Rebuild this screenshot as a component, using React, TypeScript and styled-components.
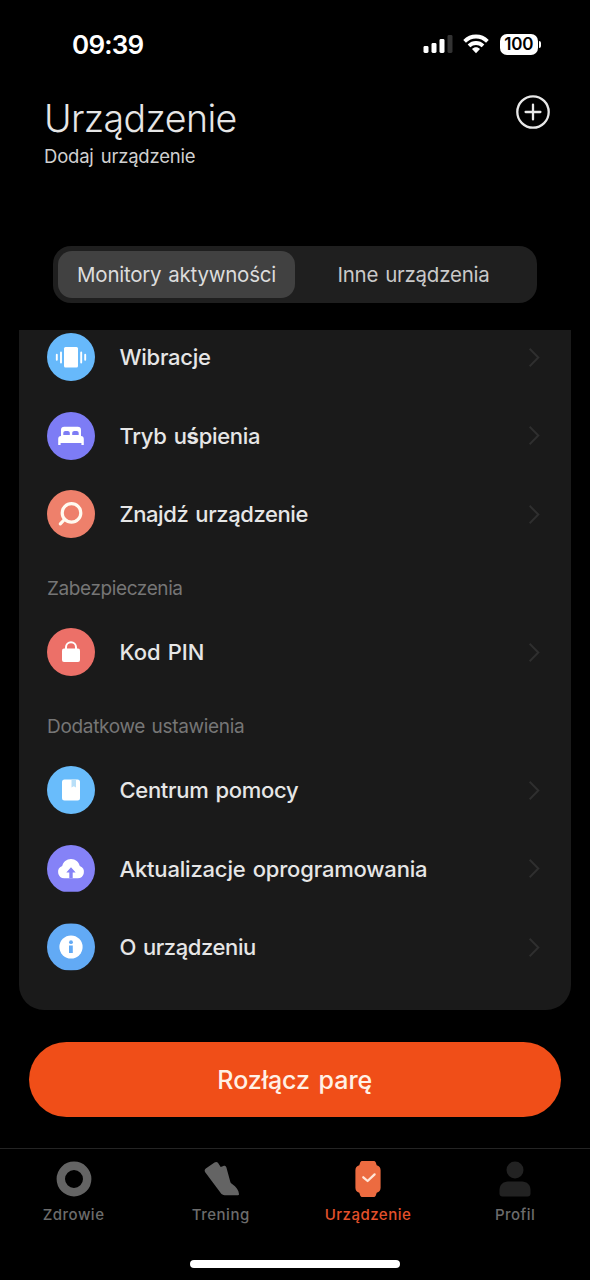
import React from "react";
import styled, { createGlobalStyle } from "styled-components";

const GlobalStyle = createGlobalStyle`
  * { box-sizing: border-box; }
  html, body { margin: 0; background: #000; }
  body { font-family: Inter, "Liberation Sans", sans-serif; color: #e6e6e6; }
  button { font: inherit; color: inherit; background: none; border: 0; padding: 0; margin: 0; }
  svg { display: block; }
`;

const Screen = styled.div`
  width: 590px;
  height: 1280px;
  display: flex;
  flex-direction: column;
  background: #000;
  overflow: hidden;
`;

const StatusBar = styled.header`
  height: 88px;
  flex: none;
  padding: 0 49px 0 72px;
  display: flex;
  align-items: center;
  justify-content: space-between;
`;

const Clock = styled.time`
  font-size: 26px;
  font-weight: 600;
  letter-spacing: -0.75px;
  color: #fff;
`;

const StatusIcons = styled.div`
  display: flex;
  align-items: center;
  gap: 10.5px;
`;

const Battery = styled.div`
  display: flex;
  align-items: center;
  gap: 1.3px;
`;

const BatteryBody = styled.div`
  width: 38px;
  height: 21px;
  border-radius: 7px;
  background: #fff;
  color: #000;
  font-size: 17px;
  font-weight: 600;
  letter-spacing: -0.2px;
  line-height: 21px;
  text-align: center;
`;

const BatteryTip = styled.div`
  width: 2px;
  height: 7px;
  border-radius: 0 2px 2px 0;
  background: #fff;
`;

const TitleBar = styled.div`
  height: 158px;
  flex: none;
  padding: 7px 40px 0 44px;
  display: flex;
  justify-content: space-between;
  align-items: flex-start;
`;

const Title = styled.h1`
  margin: 1px 0 0;
  font-size: 37.5px;
  font-weight: 300;
  line-height: 46px;
  letter-spacing: -0.6px;
`;

const Subtitle = styled.p`
  margin: 2px 0 0;
  font-size: 18.5px;
  line-height: 24px;
  font-weight: 400;
  letter-spacing: -0.2px;
  word-spacing: 2px;
  color: #d0d0d0;
`;

const Segments = styled.div`
  width: 484px;
  height: 57px;
  flex: none;
  margin-left: 53px;
  padding: 5px;
  display: flex;
  border-radius: 18px;
  background: #1f1f1f;
`;

const Segment = styled.button<{ $active?: boolean }>`
  flex: 1;
  border-radius: 14px;
  background: ${(p) => (p.$active ? "#414141" : "transparent")};
  color: ${(p) => (p.$active ? "#dcdcdc" : "#c9c9c9")};
  font-size: 20.5px;
  font-weight: 400;
  letter-spacing: -0.25px;
  word-spacing: 1.5px;
  line-height: 47px;
  white-space: nowrap;
`;

const Card = styled.main`
  width: 552px;
  height: 680px;
  flex: none;
  margin: 27px 0 0 19px;
  overflow: hidden;
  border-radius: 0 0 25px 25px;
  background: #1a1a1a;
`;

const List = styled.div`
  margin-top: -11.8px;
`;

const Row = styled.div`
  height: 78.5px;
  padding: 0 31.5px 0 28px;
  display: flex;
  align-items: center;
`;

const Badge = styled.div<{ $color: string; $cut?: boolean }>`
  width: 48px;
  height: 48px;
  flex: none;
  border-radius: 50%;
  background: ${(p) => p.$color};
  clip-path: ${(p) => (p.$cut ? "inset(0 0 1.2px 0)" : "none")};
`;

const RowLabel = styled.span<{ $spacing: number }>`
  flex: 1;
  margin-left: 24.5px;
  font-size: 22px;
  font-weight: 500;
  letter-spacing: ${(p) => p.$spacing}px;
  word-spacing: 1.5px;
  white-space: nowrap;
  b { font-weight: 700; }
`;

const GroupLabel = styled.h2<{ $spacing: number }>`
  height: 59.5px;
  margin: 0;
  padding: 23.3px 28px 0;
  font-size: 19px;
  font-weight: 400;
  line-height: 24px;
  letter-spacing: ${(p) => p.$spacing}px;
  word-spacing: 1.5px;
  color: #767676;
`;

const Unpair = styled.button`
  width: 532.5px;
  height: 75px;
  flex: none;
  margin: 32px 0 0 28.5px;
  border-radius: 38px;
  background: #f04e18;
  color: #fff1e6;
  font-size: 25px;
  font-weight: 500;
  word-spacing: 2px;
  letter-spacing: -0.05px;
`;

const TabBar = styled.nav`
  height: 110px;
  flex: none;
  margin-top: 31px;
  border-top: 1px solid #242424;
  padding-top: 12px;
  display: grid;
  grid-template-columns: repeat(4, 147.2px);
  align-items: start;
`;

const Tab = styled.button<{ $active?: boolean }>`
  display: flex;
  flex-direction: column;
  align-items: center;
  gap: 8px;
  font-size: 15px;
  font-weight: 500;
  line-height: 20px;
  letter-spacing: 0.5px;
  color: ${(p) => (p.$active ? "#e4512b" : "#6c6c6c")};
`;

const HomeBar = styled.div`
  width: 210px;
  height: 8px;
  flex: none;
  margin: 2px auto 0;
  border-radius: 4px;
  background: #fff;
`;

const Signal = () => (
  <svg width="30" height="20" viewBox="0 0 30 20" fill="#fff">
    <rect x="0.5" y="12" width="5" height="7" rx="1.4" />
    <rect x="8.5" y="9" width="5" height="10" rx="1.4" />
    <rect x="16.5" y="5" width="5" height="14" rx="1.4" />
    <rect x="24.5" y="1" width="5" height="18" rx="1.4" fill="#333" />
  </svg>
);

const Wifi = () => (
  <svg width="26" height="20" viewBox="0 0 26 20">
    <g fill="none" stroke="#fff" strokeWidth="3.8">
      <path d="M1.6 7.3C8 .9 18 .9 24.4 7.3" />
      <path d="M6 11.9C10 8 16 8 20 11.9" />
    </g>
    <path d="M9 15c2.4-2.2 5.6-2.2 8 0L13 19.2z" fill="#fff" />
  </svg>
);

const AddIcon = () => (
  <svg width="34" height="34" viewBox="0 0 34 34" fill="none" stroke="#e8e8e8" strokeWidth="2.3" strokeLinecap="round">
    <circle cx="17" cy="17" r="15.7" />
    <path d="M17 9.6v14.8M9.6 17h14.8" />
  </svg>
);

const Chevron = () => (
  <svg width="11" height="19" viewBox="0 0 11 19" fill="none" stroke="#2f2f2f" strokeWidth="2">
    <path d="M.6 .8l8.7 8.7L.6 18.2" />
  </svg>
);

const glyphs = {
  vibration: (
    <>
      <rect x="17" y="14" width="14" height="20.5" rx="1.5" fill="#fff" />
      <path d="M14 19.5v10M34.2 19.5v10M9.8 21.8v5M38.2 21.8v5" stroke="#fff" strokeWidth="1.9" strokeLinecap="round" />
    </>
  ),
  bed: (
    <path
      fillRule="evenodd"
      fill="#fff"
      d="M14 24v-6c0-2 1.2-3.2 3.2-3.2h13.6c2 0 3.2 1.2 3.2 3.2v6c1.8.1 2.8 1.2 2.8 3v6h-2.4V31H13.6v2h-2.4v-6c0-1.8 1-2.9 2.8-3zM16.3 23h6.5v-1.7c0-1.5-.9-2.3-2.1-2.3h-2.3c-1.2 0-2.1.8-2.1 2.3zM25.2 23h6.5v-1.7c0-1.5-.9-2.3-2.1-2.3h-2.3c-1.2 0-2.1.8-2.1 2.3z"
    />
  ),
  search: (
    <g fill="none" stroke="#fffaf0" strokeWidth="3.2" strokeLinecap="round">
      <circle cx="24.5" cy="22.9" r="9.3" />
      <path d="M17.5 29.5l-4.2 4.3" />
    </g>
  ),
  lock: (
    <>
      <rect x="15" y="20.5" width="18" height="13.5" rx="2" fill="#fff" />
      <path d="M19 21v-1.8a5 5 0 0 1 10 0V21" fill="none" stroke="#fff" strokeWidth="2" />
    </>
  ),
  book: (
    <>
      <rect x="15" y="13.5" width="18" height="21" rx="2.5" fill="#fff" />
      <path d="M24.5 13.5h4.5v8l-2.25-1.3-2.25 1.3z" fill="#b9dff8" />
    </>
  ),
  cloud: (
    <>
      <path
        fill="#fff"
        d="M17.5 33.3a6.3 6.3 0 0 1-2.3-12.2c.8-4 4.4-7.1 8.8-7.1s8 3.1 8.8 7.1a6.3 6.3 0 0 1-2.3 12.2z"
      />
      <path d="M24 22.3l4.7 5.2H25.700v5.800h-3.400v-5.800h-3z" fill="#8582f7" />
    </>
  ),
  info: (
    <>
      <circle cx="24" cy="24" r="11.6" fill="#fff" />
      <circle cx="24" cy="19.2" r="1.9" fill="#62aaf5" />
      <path d="M22 22.6h3.8v7.4h-3.8z" fill="#62aaf5" />
    </>
  ),
};

type Item = { icon: keyof typeof glyphs; color: string; label: React.ReactNode; spacing: number; cut?: boolean };

const groups: { title?: string; spacing?: number; items: Item[] }[] = [
  {
    items: [
      { icon: "vibration", color: "#67b9fb", label: "Wibracje", spacing: -0.25 },
      { icon: "bed", color: "#7d7cf5", label: <>Tryb u<b>ś</b>pienia</>, spacing: -0.3 },
      { icon: "search", color: "#ee806b", label: "Znajdź urządzenie", spacing: -0.4 },
    ],
  },
  { title: "Zabezpieczenia", spacing: -0.4, items: [{ icon: "lock", color: "#ec7068", label: "Kod PIN", spacing: -0.05 }] },
  {
    title: "Dodatkowe ustawienia",
    spacing: -0.32,
    items: [
      { icon: "book", color: "#69bcfb", label: "Centrum pomocy", spacing: -0.31 },
      { icon: "cloud", color: "#8582f7", label: "Aktualizacje oprogramowania", spacing: -0.18, cut: true },
      { icon: "info", color: "#62aaf5", label: "O urządzeniu", spacing: -0.4, cut: true },
    ],
  },
];

const RingIcon = () => (
  <svg width="36" height="36" viewBox="0 0 36 36">
    <circle cx="18" cy="18" r="13.2" fill="none" stroke="#646464" strokeWidth="8.4" />
  </svg>
);

const ShoeIcon = () => (
  <svg width="36" height="36" viewBox="0 0 36 36">
    <path
      fill="#646464"
      d="M2.8 7.600L11.500 1.500c1.400-1 2.800-.7 3.600.6l2.600 4 2.700-1.200c1.300-.5 2.600.1 3 1.600l3.900 14.300c.3 1 .8 1.600 1.800 2.300 4.300 2.900 6.600 6.400 6.900 9.900.1.800-.4 1.200-1.200 1.200H21.700c-1.700 0-3-.7-4-2.100L2.200 11.300C1.300 9.900 1.500 8.500 2.800 7.600z"
    />
  </svg>
);

const WatchIcon = () => (
  <svg width="36" height="36" viewBox="0 0 36 36">
    <path
      fill="#ec6b40"
      d="M12.5 0h11c1.3 0 2 .6 2.4 1.800l.8 2.400c2.500.7 3.900 2.500 3.900 5v17.600c0 2.500-1.400 4.300-3.900 5l-.8 2.400c-.4 1.200-1.100 1.800-2.400 1.800h-11c-1.300 0-2-.6-2.400-1.800l-.8-2.400c-2.500-.7-3.900-2.500-3.900-5V9.200c0-2.500 1.400-4.300 3.900-5l.8-2.400C10.500.6 11.200 0 12.500 0z"
    />
    <path d="M13.3 16.3l4.3 3.700 7-6.600" fill="none" stroke="#ffe6d8" strokeWidth="2.3" strokeLinecap="round" strokeLinejoin="round" />
  </svg>
);

const PersonIcon = () => (
  <svg width="36" height="36" viewBox="0 0 36 36" fill="#222">
    <circle cx="18" cy="9" r="8.5" />
    <path d="M11 20.5h14c5 0 8.5 3.500 8.500 8.500v3.500c0 2-1 3-3 3h-25c-2 0-3-1-3-3V29c0-5 3.500-8.500 8.500-8.500z" />
  </svg>
);

export default function App() {
  return (
    <>
      <GlobalStyle />
      <Screen>
        <StatusBar>
          <Clock>09:39</Clock>
          <StatusIcons>
            <Signal />
            <Wifi />
            <Battery>
              <BatteryBody>100</BatteryBody>
              <BatteryTip />
            </Battery>
          </StatusIcons>
        </StatusBar>
        <TitleBar>
          <div>
            <Title>Urządzenie</Title>
            <Subtitle>Dodaj urządzenie</Subtitle>
          </div>
          <button aria-label="Dodaj urządzenie">
            <AddIcon />
          </button>
        </TitleBar>
        <Segments>
          <Segment $active>Monitory aktywności</Segment>
          <Segment>Inne urządzenia</Segment>
        </Segments>
        <Card>
          <List>
            {groups.map((group, i) => (
              <React.Fragment key={i}>
                {group.title && <GroupLabel $spacing={group.spacing ?? 0}>{group.title}</GroupLabel>}
                {group.items.map((item) => (
                  <Row key={item.icon}>
                    <Badge $color={item.color} $cut={item.cut}>
                      <svg width="48" height="48" viewBox="0 0 48 48">
                        {glyphs[item.icon]}
                      </svg>
                    </Badge>
                    <RowLabel $spacing={item.spacing}>{item.label}</RowLabel>
                    <Chevron />
                  </Row>
                ))}
              </React.Fragment>
            ))}
          </List>
        </Card>
        <Unpair>Rozłącz parę</Unpair>
        <TabBar>
          <Tab>
            <RingIcon />
            Zdrowie
          </Tab>
          <Tab>
            <ShoeIcon />
            Trening
          </Tab>
          <Tab $active>
            <WatchIcon />
            Urządzenie
          </Tab>
          <Tab>
            <PersonIcon />
            Profil
          </Tab>
        </TabBar>
        <HomeBar />
      </Screen>
    </>
  );
}
